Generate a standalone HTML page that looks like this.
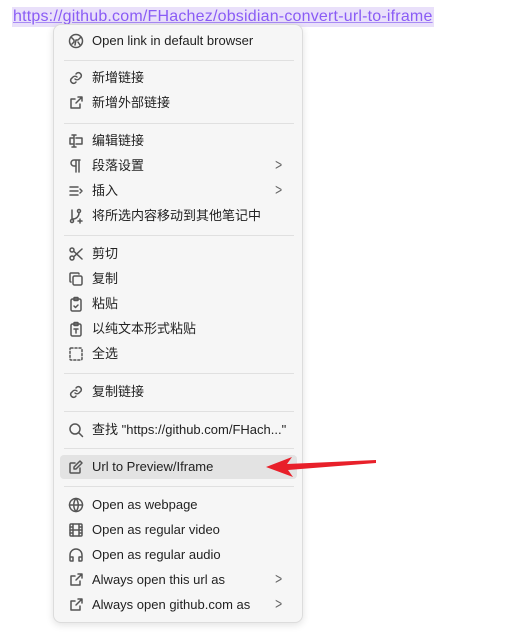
<!DOCTYPE html>
<html><head><meta charset="utf-8"><style>
body{margin:0;width:518px;height:636px;background:#fff;position:relative;overflow:hidden;font-family:"Liberation Sans","Noto Sans CJK SC",sans-serif;}
.link{position:absolute;left:12px;top:7px;height:20px;background:#e9e0fa;color:#8a5cf5;font-size:16px;line-height:20px;text-decoration:underline;text-decoration-color:#a88af5;padding:0 1px;white-space:nowrap;letter-spacing:0.2px}
.menu{position:absolute;left:53px;top:24px;width:248px;height:597px;background:#f6f6f6;border:1px solid #dcdcdc;border-radius:8px;box-shadow:0 2px 8px rgba(0,0,0,.12)}
.it{position:absolute;left:6px;width:237px;height:24px;font-size:13px;color:#222;line-height:24px;margin-top:1px}
.it svg{position:absolute;left:8px;top:4px;width:16px;height:16px;fill:none;stroke:#555;stroke-width:1.5;stroke-linecap:round;stroke-linejoin:round}
.it span{position:absolute;left:32px;white-space:nowrap}
.it .ch{left:auto;right:14px;color:#666;font-size:16px;transform:scaleX(0.75)}
.hl{background:#e3e3e3;border-radius:4px}
.sep{position:absolute;left:10px;width:230px;height:1px;background:#e0e0e0}
</style></head><body>
<div class="link">https://github.com/FHachez/obsidian-convert-url-to-iframe</div>
<div class="menu">
<div class="it" style="top:3px"><svg viewBox="0 0 16 16"><circle cx="8" cy="8" r="6.5"/><path d="M3 4l3 3v2l-2 2M13 4l-3 3H8l-1 5M10 9l2 3"/></svg><span>Open link in default browser</span></div>
<div class="sep" style="top:35px"></div>
<div class="it" style="top:40px"><svg viewBox="0 0 16 16"><path d="M7 9a3 3 0 0 0 4 0l2-2a3 3 0 0 0-4-4l-1 1M9 7a3 3 0 0 0-4 0L3 9a3 3 0 0 0 4 4l1-1"/></svg><span>新增链接</span></div>
<div class="it" style="top:65px"><svg viewBox="0 0 16 16"><path d="M12 9v4H3V4h4M10 2h4v4M14 2L8 8"/></svg><span>新增外部链接</span></div>
<div class="sep" style="top:98px"></div>
<div class="it" style="top:103px"><svg viewBox="0 0 16 16"><path d="M6 2v12M4 2h4M4 14h4M8 5h6v6H8M5 5H2v6h3"/></svg><span>编辑链接</span></div>
<div class="it" style="top:128px"><svg viewBox="0 0 16 16"><path d="M11 2v12M8 2v12M12 2H6a3 3 0 0 0 0 6h2"/></svg><span>段落设置</span><span class="ch">&gt;</span></div>
<div class="it" style="top:153px"><svg viewBox="0 0 16 16"><path d="M2 4h8M2 8h8M2 12h8M12 6l2 2-2 2"/></svg><span>插入</span><span class="ch">&gt;</span></div>
<div class="it" style="top:178px"><svg viewBox="0 0 16 16"><circle cx="4" cy="13" r="1.5"/><circle cx="11" cy="3" r="1.5"/><path d="M4 2v9M11 5a6 6 0 0 1-6 6M12 11v4M10 13h4"/></svg><span>将所选内容移动到其他笔记中</span></div>
<div class="sep" style="top:210px"></div>
<div class="it" style="top:216px"><svg viewBox="0 0 16 16"><circle cx="4" cy="4" r="2"/><circle cx="4" cy="12" r="2"/><path d="M14 3L6 10.5M14 13L6 5.5"/></svg><span>剪切</span></div>
<div class="it" style="top:241px"><svg viewBox="0 0 16 16"><rect x="5" y="5" width="9" height="9" rx="1.5"/><path d="M3 11a1 1 0 0 1-1-1V3a1 1 0 0 1 1-1h7a1 1 0 0 1 1 1"/></svg><span>复制</span></div>
<div class="it" style="top:266px"><svg viewBox="0 0 16 16"><rect x="3" y="3" width="10" height="12" rx="1.5"/><rect x="6" y="1.5" width="4" height="3" rx=".5"/><path d="M6 10l1.5 1.5L10 9"/></svg><span>粘贴</span></div>
<div class="it" style="top:291px"><svg viewBox="0 0 16 16"><rect x="3" y="3" width="10" height="12" rx="1.5"/><rect x="6" y="1.5" width="4" height="3" rx=".5"/><path d="M6 8h4M8 8v4"/></svg><span>以纯文本形式粘贴</span></div>
<div class="it" style="top:316px"><svg viewBox="0 0 16 16" style="stroke-dasharray:2 2"><rect x="2" y="2" width="12" height="12" rx="1"/></svg><span>全选</span></div>
<div class="sep" style="top:348px"></div>
<div class="it" style="top:354px"><svg viewBox="0 0 16 16"><path d="M7 9a3 3 0 0 0 4 0l2-2a3 3 0 0 0-4-4l-1 1M9 7a3 3 0 0 0-4 0L3 9a3 3 0 0 0 4 4l1-1"/></svg><span>复制链接</span></div>
<div class="sep" style="top:386px"></div>
<div class="it" style="top:392px"><svg viewBox="0 0 16 16"><circle cx="7" cy="7" r="5"/><path d="M11 11l3.5 3.5"/></svg><span>查找 "https://github.com/FHach..."</span></div>
<div class="sep" style="top:423px"></div>
<div class="it hl" style="top:429px"><svg viewBox="0 0 16 16"><path d="M12 9v4a1 1 0 0 1-1 1H3a1 1 0 0 1-1-1V5a1 1 0 0 1 1-1h4M12 2l2 2-6 6H6V8z"/></svg><span>Url to Preview/Iframe</span></div>
<div class="sep" style="top:461px"></div>
<div class="it" style="top:467px"><svg viewBox="0 0 16 16"><circle cx="8" cy="8" r="6.5"/><path d="M1.5 8h13M8 1.5c-3 3.5-3 9.5 0 13M8 1.5c3 3.5 3 9.5 0 13"/></svg><span>Open as webpage</span></div>
<div class="it" style="top:492px"><svg viewBox="0 0 16 16"><rect x="2" y="2" width="12" height="12" rx="1"/><path d="M5 2v12M11 2v12M2 8h12M2 5h3M2 11h3M11 5h3M11 11h3"/></svg><span>Open as regular video</span></div>
<div class="it" style="top:517px"><svg viewBox="0 0 16 16"><path d="M2 12V8a6 6 0 0 1 12 0v4M2 10h3v4H3a1 1 0 0 1-1-1zM14 10h-3v4h2a1 1 0 0 0 1-1z"/></svg><span>Open as regular audio</span></div>
<div class="it" style="top:542px"><svg viewBox="0 0 16 16"><path d="M12 9v4H3V4h4M10 2h4v4M14 2L8 8"/></svg><span>Always open this url as</span><span class="ch">&gt;</span></div>
<div class="it" style="top:567px"><svg viewBox="0 0 16 16"><path d="M12 9v4H3V4h4M10 2h4v4M14 2L8 8"/></svg><span>Always open github.com as</span><span class="ch">&gt;</span></div>
</div>
<svg style="position:absolute;left:0;top:0" width="518" height="636"><polygon points="266,467 292,457 287,464 376,460 376,463 288,470 293,477" fill="#e8202a"/></svg>
</body></html>
